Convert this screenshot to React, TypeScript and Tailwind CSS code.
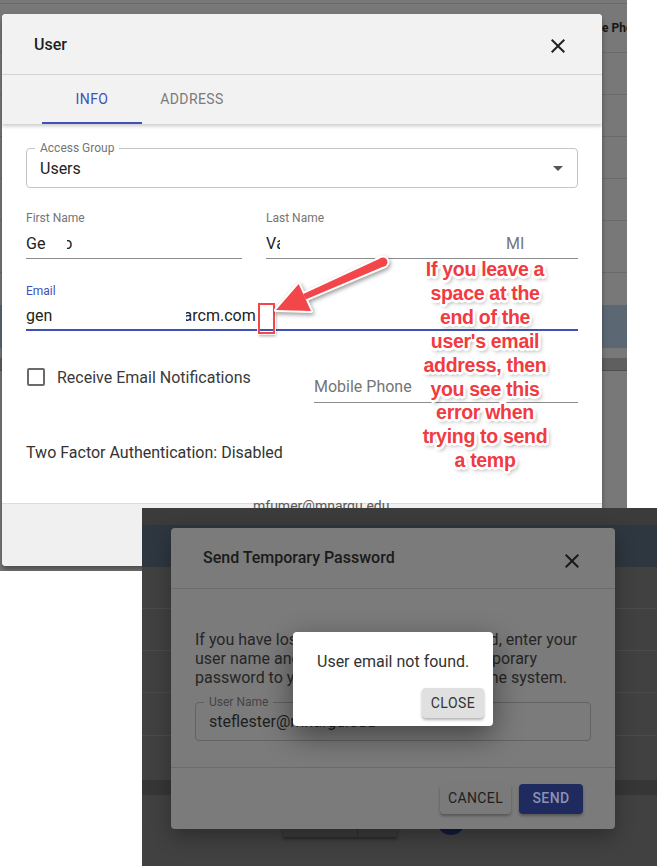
import React from "react";

const CloseIcon = ({ className }: { className?: string }) => (
  <svg viewBox="0 0 24 24" className={className} fill="currentColor">
    <path d="M19 6.41L17.59 5 12 10.59 6.41 5 5 6.41 10.59 12 5 17.59 6.41 19 12 13.41 17.59 19 19 17.59 13.41 12z" />
  </svg>
);

const DropIcon = ({ className }: { className?: string }) => (
  <svg viewBox="0 0 24 24" className={className} fill="currentColor">
    <path d="M7 10l5 5 5-5z" />
  </svg>
);

function UnderlineField({
  label,
  value,
  placeholder,
  className,
}: {
  label?: string;
  value?: React.ReactNode;
  placeholder?: string;
  className?: string;
}) {
  return (
    <div className={className}>
      <div className="h-[14px] text-[12px] leading-[14px] text-[#757575]">{label}</div>
      <div className="mt-[9px] pb-[5px] border-b border-[#8c8c8c]">
        <div className="h-[19px] text-[16px] leading-[19px] text-[#222] whitespace-nowrap overflow-hidden">
          {value}
          {placeholder ? <span className="text-[#757575]">{placeholder}</span> : null}
        </div>
      </div>
    </div>
  );
}

function TopShot() {
  return (
    <div className="relative w-[627px] h-[571px] bg-[#787878] overflow-hidden">
      {/* page behind the dialog */}
      <div className="flex flex-col">
        <div className="h-[4px] border-b border-[#6a6a6a]" />
        <div className="flex h-[49px] items-center border-b border-[#6a6a6a]">
          <div className="w-[602px] shrink-0" />
          <span className="text-[12px] font-bold text-[#161616] whitespace-nowrap">e Phone</span>
        </div>
        <div className="h-[42px] border-b border-[#6a6a6a]" />
        <div className="h-[42px] border-b border-[#6a6a6a]" />
        <div className="h-[42px] border-b border-[#6a6a6a]" />
        <div className="h-[42px] border-b border-[#6a6a6a]" />
        <div className="h-[52px] border-b border-[#6a6a6a]" />
        <div className="h-[32px]" />
        <div className="h-[43px] bg-[#5b6874]" />
        <div className="h-[10px]" />
        <div className="h-[13px] bg-[#5f5f5f] border-b border-[#4f4f4f]" />
      </div>

      {/* User dialog */}
      <div className="absolute left-[2px] top-[14px] w-[600px] h-[552px] rounded-[4px] bg-white flex flex-col overflow-hidden shadow-[0_4px_5px_rgba(0,0,0,0.35)]">
        <div className="h-[61px] shrink-0 bg-[#f2f2f2] border-b border-[#d9d9d9] flex items-center justify-between pl-[32px] pr-[32px]">
          <span className="mt-[2px] text-[16px] font-medium text-[#1e1e1e]">User</span>
          <CloseIcon className="mt-[4px] w-6 h-6 text-[#222]" />
        </div>
        <div className="relative z-10 h-[49px] shrink-0 bg-[#f2f2f2] flex pl-[40px] shadow-[0_2px_4px_rgba(0,0,0,0.22)]">
          <div className="w-[100px] h-full flex items-center justify-center border-b-2 border-[#3f51b5] text-[14px] tracking-[0.4px] text-[#3f51b5] pt-[2px]">
            INFO
          </div>
          <div className="w-[100px] h-full flex items-center justify-center text-[14px] tracking-[0.4px] text-[#7a7a7a]">
            ADDRESS
          </div>
        </div>
        <div className="flex-1 bg-white px-[24px]">
          <div className="relative mt-[24px] h-[40px] rounded-[4px] border border-[#c4c4c4] flex items-center justify-between pl-[13px] pr-[7px]">
            <span className="absolute -top-[8px] left-[8px] px-[5px] bg-white text-[12px] leading-[14px] text-[#757575]">
              Access Group
            </span>
            <span className="text-[16px] leading-[19px] text-[#222]">Users</span>
            <DropIcon className="w-6 h-6 text-[#555]" />
          </div>

          <div className="mt-[23px] flex">
            <UnderlineField
              className="w-[216px]"
              label="First Name"
              value={
                <span className="inline-flex">
                  <span>Ge</span>
                  <span className="ml-[22px] inline-flex w-[5px] justify-end overflow-hidden">o</span>
                </span>
              }
            />
            <UnderlineField
              className="ml-[24px] w-[240px]"
              label="Last Name"
              value={
                <span className="inline-flex">
                  <span>V</span>
                  <span className="inline-block w-[4px] overflow-hidden">a</span>
                </span>
              }
            />
            <UnderlineField className="w-[72px]" placeholder="MI" />
          </div>

          <div className="mt-[25px]">
            <div className="h-[14px] text-[12px] leading-[14px] text-[#3f51b5]">Email</div>
            <div className="mt-[8px] pb-[4px] border-b-2 border-[#3f51b5]">
              <div className="h-[19px] text-[16px] leading-[19px] text-[#222] flex whitespace-nowrap">
                <span>gen</span>
                <span className="ml-[134px] inline-flex w-[6px] justify-end overflow-hidden">a</span>
                <span>rcm.com</span>
              </div>
            </div>
          </div>

          <div className="mt-[37px] flex">
            <div className="w-[288px] h-[18px] flex items-center">
              <div className="ml-[1px] w-[18px] h-[18px] rounded-[2px] border-2 border-[#6a6a6a]" />
              <span className="ml-[12px] text-[16px] leading-[19px] text-[#3a3a3a]">
                Receive Email Notifications
              </span>
            </div>
            <div className="w-[264px] mt-[9px] pb-[6px] border-b border-[#8c8c8c]">
              <div className="h-[19px] text-[16px] leading-[19px] text-[#757575]">Mobile Phone</div>
            </div>
          </div>

          <div className="mt-[40px] text-[16px] leading-[19px] text-[#333]">
            Two Factor Authentication: Disabled
          </div>
        </div>
        <div className="h-[63px] shrink-0 bg-[#f0f0f0] border-t border-[#dcdcdc]" />
      </div>

      {/* partial text peeking above the second capture */}
      <div className="absolute left-[253px] top-[498px] text-[14px] leading-[16px] text-[#5a5a5a] whitespace-nowrap">
        mfumer@mnargu.edu
      </div>
    </div>
  );
}

function BottomShot() {
  return (
    <div className="absolute left-[142px] top-[508px] w-[515px] h-[358px] bg-[#414141] overflow-hidden">
      <div className="flex flex-col">
        <div className="h-[17px] bg-[#3b3b3b]" />
        <div className="h-[42px] bg-[#2e363f]" />
        <div className="h-[42px] border-b border-[#4b4b4b]" />
        <div className="h-[42px] border-b border-[#4b4b4b]" />
        <div className="h-[42px] border-b border-[#4b4b4b]" />
        <div className="h-[43px] border-b border-[#4b4b4b]" />
        <div className="h-[44px]" />
        <div className="h-[15px] bg-[#363636]" />
      </div>

      {/* items under the dialog */}
      <div className="absolute left-[141px] top-[304px] w-[114px] h-[25px] bg-[#3c3c3c] flex shadow-[0_2px_3px_rgba(0,0,0,0.4)]">
        <div className="w-[75px] h-full border-r border-[#2e2e2e]" />
      </div>
      <div className="absolute left-[295px] top-[299px] w-[28px] h-[28px] rounded-full bg-[#141a3c]" />

      {/* Send Temporary Password dialog */}
      <div className="absolute left-[29px] top-[20px] w-[444px] h-[301px] rounded-[4px] bg-[#7b7b7b] flex flex-col overflow-hidden shadow-[0_8px_20px_rgba(0,0,0,0.3)]">
        <div className="h-[61px] shrink-0 border-b border-[#6c6c6c] flex items-center justify-between pl-[32px] pr-[31px]">
          <span className="text-[16px] font-medium text-[#1a1a1a]">Send Temporary Password</span>
          <CloseIcon className="mt-[6px] w-6 h-6 text-[#1a1a1a]" />
        </div>
        <div className="flex-1 px-[24px] pt-[41px] text-[16px] leading-[19px] text-[#262626]">
          <div className="flex w-[382px] whitespace-nowrap">
            <span>If you have lost</span>
            <span className="ml-auto">d, enter your</span>
          </div>
          <div className="flex w-[342px] whitespace-nowrap">
            <span>user name and</span>
            <span className="ml-auto">porary</span>
          </div>
          <div className="flex w-[372px] whitespace-nowrap">
            <span>password to your</span>
            <span className="ml-auto">he system.</span>
          </div>
          <div className="relative mt-[15px] h-[39px] rounded-[4px] border border-[#626262] flex items-center pl-[13px]">
            <span className="absolute -top-[8px] left-[8px] px-[5px] bg-[#7b7b7b] text-[12px] leading-[14px] text-[#444]">
              User Name
            </span>
            <span className="text-[#1e1e1e]">steflester@mnargu.edu</span>
          </div>
        </div>
        <div className="h-[62px] shrink-0 border-t border-[#6b6b6b] flex items-center justify-end gap-[8px] pr-[32px]">
          <div className="w-[71px] h-[30px] rounded-[4px] bg-[#7a7a7a] flex items-center justify-center text-[14px] tracking-[0.4px] text-[#1e1e1e] shadow-[0_2px_3px_rgba(0,0,0,0.3)]">
            CANCEL
          </div>
          <div className="w-[64px] h-[30px] rounded-[4px] bg-[#1f2a5f] flex items-center justify-center text-[14px] font-medium tracking-[0.4px] text-[#8c92b2] shadow-[0_2px_3px_rgba(0,0,0,0.3)]">
            SEND
          </div>
        </div>
      </div>

      {/* error modal */}
      <div className="absolute left-[151px] top-[124px] w-[200px] h-[94px] rounded-[4px] bg-white shadow-[0_10px_30px_rgba(0,0,0,0.45)]">
        <div className="pt-[20px] pl-[24px] text-[16px] leading-[19px] text-[#333]">User email not found.</div>
        <div className="mt-[17px] flex justify-end pr-[9px]">
          <div className="w-[62px] h-[30px] rounded-[4px] bg-[#e0e0e0] flex items-center justify-center text-[14px] tracking-[0.5px] text-[#333] shadow-[0_2px_3px_rgba(0,0,0,0.3)]">
            CLOSE
          </div>
        </div>
      </div>
    </div>
  );
}

function Annotation() {
  const lines = [
    "If you leave a",
    "space at the",
    "end of the",
    "user's email",
    "address, then",
    "you see this",
    "error when",
    "trying to send",
    "a temp",
  ];
  return (
    <>
      <div className="absolute left-[258px] top-[303px] w-[17px] h-[31px] border-2 border-[#f2464b] shadow-[0_0_0_1px_rgba(255,255,255,0.85),1px_2px_3px_rgba(0,0,0,0.35)]" />
      <svg
        className="absolute left-[265px] top-[250px] w-[130px] h-[75px] [filter:drop-shadow(1px_2px_2px_rgba(0,0,0,0.4))]"
        viewBox="265 250 130 75"
      >
        <g fill="#fff" stroke="#fff" strokeWidth="4" strokeLinejoin="round">
          <polygon points="381.2,257.9 384.8,266.1 305.6,299.5 303.2,294.1" />
          <circle cx="383" cy="262" r="4.5" />
          <polygon points="276,310 298.7,284 311,311" />
        </g>
        <g fill="#f2464b">
          <polygon points="381.2,257.9 384.8,266.1 305.6,299.5 303.2,294.1" />
          <circle cx="383" cy="262" r="4.5" />
          <polygon points="276,310 298.7,284 311,311" />
        </g>
      </svg>
      <div className="absolute left-[395px] top-[258px] w-[180px] text-center text-[19.5px] font-bold leading-[23.9px] tracking-[-0.3px] text-[#f23a41] [font-family:'Liberation_Sans',Arial,sans-serif] [text-shadow:-2px_-2px_0_#fff,2px_-2px_0_#fff,-2px_2px_0_#fff,2px_2px_0_#fff,0_-2.5px_0_#fff,0_2.5px_0_#fff,-2.5px_0_0_#fff,2.5px_0_0_#fff,2px_3px_4px_rgba(0,0,0,0.5)]">
        {lines.map((l) => (
          <div key={l} className="whitespace-nowrap">
            {l}
          </div>
        ))}
      </div>
    </>
  );
}

export default function App() {
  return (
    <div className="relative w-[657px] h-[866px] bg-white overflow-hidden [font-family:Roboto,'Liberation_Sans',sans-serif]">
      <TopShot />
      <BottomShot />
      <Annotation />
    </div>
  );
}
